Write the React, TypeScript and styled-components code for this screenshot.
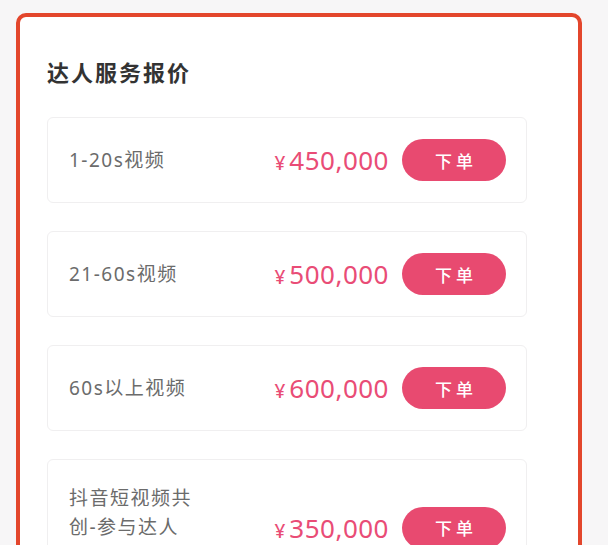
import React from 'react'
import styled, { createGlobalStyle } from 'styled-components'

const GlobalStyle = createGlobalStyle`
    html, body {
        margin: 0;
        padding: 0;
        background: #f7f6f7;
        font-family: "Noto Sans", "Noto Sans CJK SC", sans-serif;
    }
`

type Quote = {
    label: string
    price: string
}

const quotes: Quote[] = [
    { label: '1-20s视频', price: '450,000' },
    { label: '21-60s视频', price: '500,000' },
    { label: '60s以上视频', price: '600,000' },
    { label: '抖音短视频共创-参与达人', price: '350,000' },
]

function App() {
    return (
        <>
            <GlobalStyle />
            <Page>
                <Panel>
                    <Title>达人服务报价</Title>
                    <List>
                        {quotes.map((q) => (
                            <Card key={q.label}>
                                <Label>{q.label}</Label>
                                <Actions>
                                    <Price>
                                        <Yen>¥</Yen>
                                        {q.price}
                                    </Price>
                                    <OrderButton>下单</OrderButton>
                                </Actions>
                            </Card>
                        ))}
                    </List>
                </Panel>
            </Page>
        </>
    )
}

const Page = styled.div`
    height: 545px;
    overflow: hidden;
    padding: 13px 0 0 16px;
    box-sizing: border-box;
`
const Panel = styled.div`
    width: 566px;
    min-height: 700px;
    box-sizing: border-box;
    border: 4px solid #e3462c;
    border-radius: 10px;
    background: #ffffff;
    padding: 40px 48px 0 27px;
`
const Title = styled.h2`
    margin: 0 0 30px;
    font-size: 22px;
    line-height: 30px;
    font-weight: 700;
    letter-spacing: 2px;
    color: #333333;
`
const List = styled.div`
    display: flex;
    flex-direction: column;
    gap: 28px;
    width: 480px;
`
// 여러 줄 라벨일 때 마지막 줄이 버튼과 같은 높이에 오도록 아래 정렬
const Card = styled.div`
    display: flex;
    align-items: flex-end;
    padding: 21px 20px 21px 21px;
    border: 1px solid #f0eff0;
    border-radius: 6px;
`
const Label = styled.div`
    max-width: 124px;
    margin-right: auto;
    padding: 3px 0 6.5px;
    font-size: 19px;
    line-height: 29px;
    letter-spacing: 1.5px;
    color: #6b6b6b;
`
const Actions = styled.div`
    display: flex;
    align-items: center;
    gap: 13px;
`
const Price = styled.div`
    display: flex;
    align-items: baseline;
    font-size: 26px;
    font-weight: 400;
    letter-spacing: 0.5px;
    color: #e94c76;
`
const Yen = styled.span`
    font-size: 19px;
    font-weight: 500;
    margin-right: 4px;
    letter-spacing: 0;
`
const OrderButton = styled.button`
    width: 104px;
    height: 42px;
    border: none;
    border-radius: 21px;
    background: #e84a70;
    color: #ffffff;
    font-family: inherit;
    font-size: 17px;
    font-weight: 500;
    letter-spacing: 4px;
    padding: 0 0 0 4px;
    cursor: pointer;
`

export default App
